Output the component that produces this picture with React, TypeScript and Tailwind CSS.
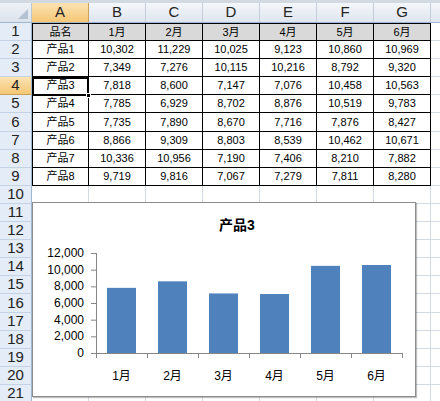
import React from 'react';

const cols = ['A', 'B', 'C', 'D', 'E', 'F', 'G'];
const months = ['1月', '2月', '3月', '4月', '5月', '6月'];

const products: [string, number[]][] = [
  ['产品1', [10302, 11229, 10025, 9123, 10860, 10969]],
  ['产品2', [7349, 7276, 10115, 10216, 8792, 9320]],
  ['产品3', [7818, 8600, 7147, 7076, 10458, 10563]],
  ['产品4', [7785, 6929, 8702, 8876, 10519, 9783]],
  ['产品5', [7735, 7890, 8670, 7716, 7876, 8427]],
  ['产品6', [8866, 9309, 8803, 8539, 10462, 10671]],
  ['产品7', [10336, 10956, 7190, 7406, 8210, 7882]],
  ['产品8', [9719, 9816, 7067, 7279, 7811, 8280]],
];

const fmt = (n: number) => n.toLocaleString('en-US');

const font = { fontFamily: '"Liberation Sans", "Noto Sans CJK SC", sans-serif' };

function Chart() {
  const values = products[2][1];
  const axisX = 63;
  const bottom = 150;
  const cat = 51;
  return (
    <div className="absolute left-[32px] top-[202px] w-[384px] h-[195px] bg-white border border-[#8c8c8c] shadow-[1px_1px_1px_rgba(0,0,0,0.25)]">
      <svg width="382" height="193" className="block" style={font}>
        <text x="204" y="27" textAnchor="middle" fontSize="14" fontWeight="bold" fill="#000">
          产品3
        </text>
        {[0, 2000, 4000, 6000, 8000, 10000, 12000].map((v) => {
          const y = bottom - (v / 12000) * 100;
          return (
            <g key={v}>
              <line x1={axisX - 5} x2={axisX} y1={y + 0.5} y2={y + 0.5} stroke="#868686" />
              <text x={axisX - 12} y={y + 4} textAnchor="end" fontSize="12" fill="#000">
                {fmt(v)}
              </text>
            </g>
          );
        })}
        {values.map((v, i) => {
          const h = (v / 12000) * 100;
          return (
            <rect key={i} x={axisX + i * cat + 11} y={bottom - h} width="29" height={h} fill="#4f81bd" />
          );
        })}
        <line x1={axisX + 0.5} x2={axisX + 0.5} y1="50" y2={bottom} stroke="#868686" />
        <line x1={axisX} x2={axisX + cat * 6} y1={bottom + 0.5} y2={bottom + 0.5} stroke="#868686" />
        {[0, 1, 2, 3, 4, 5, 6].map((i) => (
          <line
            key={i}
            x1={axisX + i * cat + 0.5}
            x2={axisX + i * cat + 0.5}
            y1={bottom}
            y2={bottom + 5}
            stroke="#868686"
          />
        ))}
        {months.map((m, i) => (
          <text key={m} x={axisX + i * cat + cat / 2} y="177" textAnchor="middle" fontSize="12" fill="#000">
            {m}
          </text>
        ))}
      </svg>
    </div>
  );
}

export default function App() {
  const rows = Array.from({ length: 21 }, (_, i) => i + 1);

  const cellText = (r: number, c: number) => {
    if (r === 1) return c === 0 ? '品名' : months[c - 1];
    if (r <= 9) {
      const p = products[r - 2];
      return c === 0 ? p[0] : fmt(p[1][c - 1]);
    }
    return '';
  };

  return (
    <div className="relative w-[440px] h-[401px] overflow-hidden bg-white" style={font}>
      <div className="h-[3px] bg-[#d3d9e1]" />
      {/* column headers */}
      <div className="flex h-[20px] border-b border-[#9eb6ce]">
        <div className="relative w-[32px] shrink-0 bg-gradient-to-b from-[#eef2f7] to-[#dce3ec] border-r border-[#b9c6d6]">
          <div className="absolute right-[3px] bottom-[3px] w-0 h-0 border-l-[10px] border-l-transparent border-b-[10px] border-b-[#b4c1d1]" />
        </div>
        {cols.map((c) => (
          <div
            key={c}
            className={
              c === 'A'
                ? 'w-[57px] shrink-0 flex items-center justify-center text-[15px] text-[#222] bg-gradient-to-b from-[#fbe3b2] to-[#f5c774] border-r border-[#c9a25c]'
                : 'w-[57px] shrink-0 flex items-center justify-center text-[15px] text-[#222] bg-gradient-to-b from-[#f4f7fb] to-[#dfe5ee] border-r border-[#c3ccd8]'
            }
          >
            {c}
          </div>
        ))}
        <div className="flex-1 bg-gradient-to-b from-[#f4f7fb] to-[#dfe5ee]" />
      </div>
      {rows.map((r) => (
        <div key={r} className={r === 6 || r === 16 ? 'flex h-[19px]' : 'flex h-[18px]'}>
          <div
            className={
              r === 4
                ? 'w-[32px] shrink-0 flex items-center justify-center text-[15px] text-[#222] bg-gradient-to-b from-[#fbe3b2] to-[#f5c774] border-r border-r-[#9eb6ce] border-b border-b-[#c9a25c]'
                : 'w-[32px] shrink-0 flex items-center justify-center text-[15px] text-[#222] bg-[#e4ecf7] border-r border-r-[#9eb6ce] border-b border-b-[#c5d2e3]'
            }
          >
            {r}
          </div>
          {cols.map((c, ci) => {
            const inTable = r <= 9;
            let cls =
              'w-[57px] shrink-0 flex items-center justify-center text-[11px] text-black border-r border-b';
            cls += inTable ? ' border-black' : ' border-[#d4dae4]';
            if (inTable && ci === 0) cls += ' border-l border-l-black';
            if (r === 1) cls += ' border-t border-t-black bg-[#d9d9d9]';
            return (
              <div key={c} className={cls}>
                {cellText(r, ci)}
              </div>
            );
          })}
          <div className="flex-1 border-b border-[#d4dae4]" />
        </div>
      ))}
      {/* selected cell A4 */}
      <div className="absolute left-[32px] top-[77px] w-[57px] h-[19px] border-2 border-black" />
      <div className="absolute left-[86px] top-[93px] w-[5px] h-[5px] bg-black border border-white" />
      <Chart />
    </div>
  );
}
